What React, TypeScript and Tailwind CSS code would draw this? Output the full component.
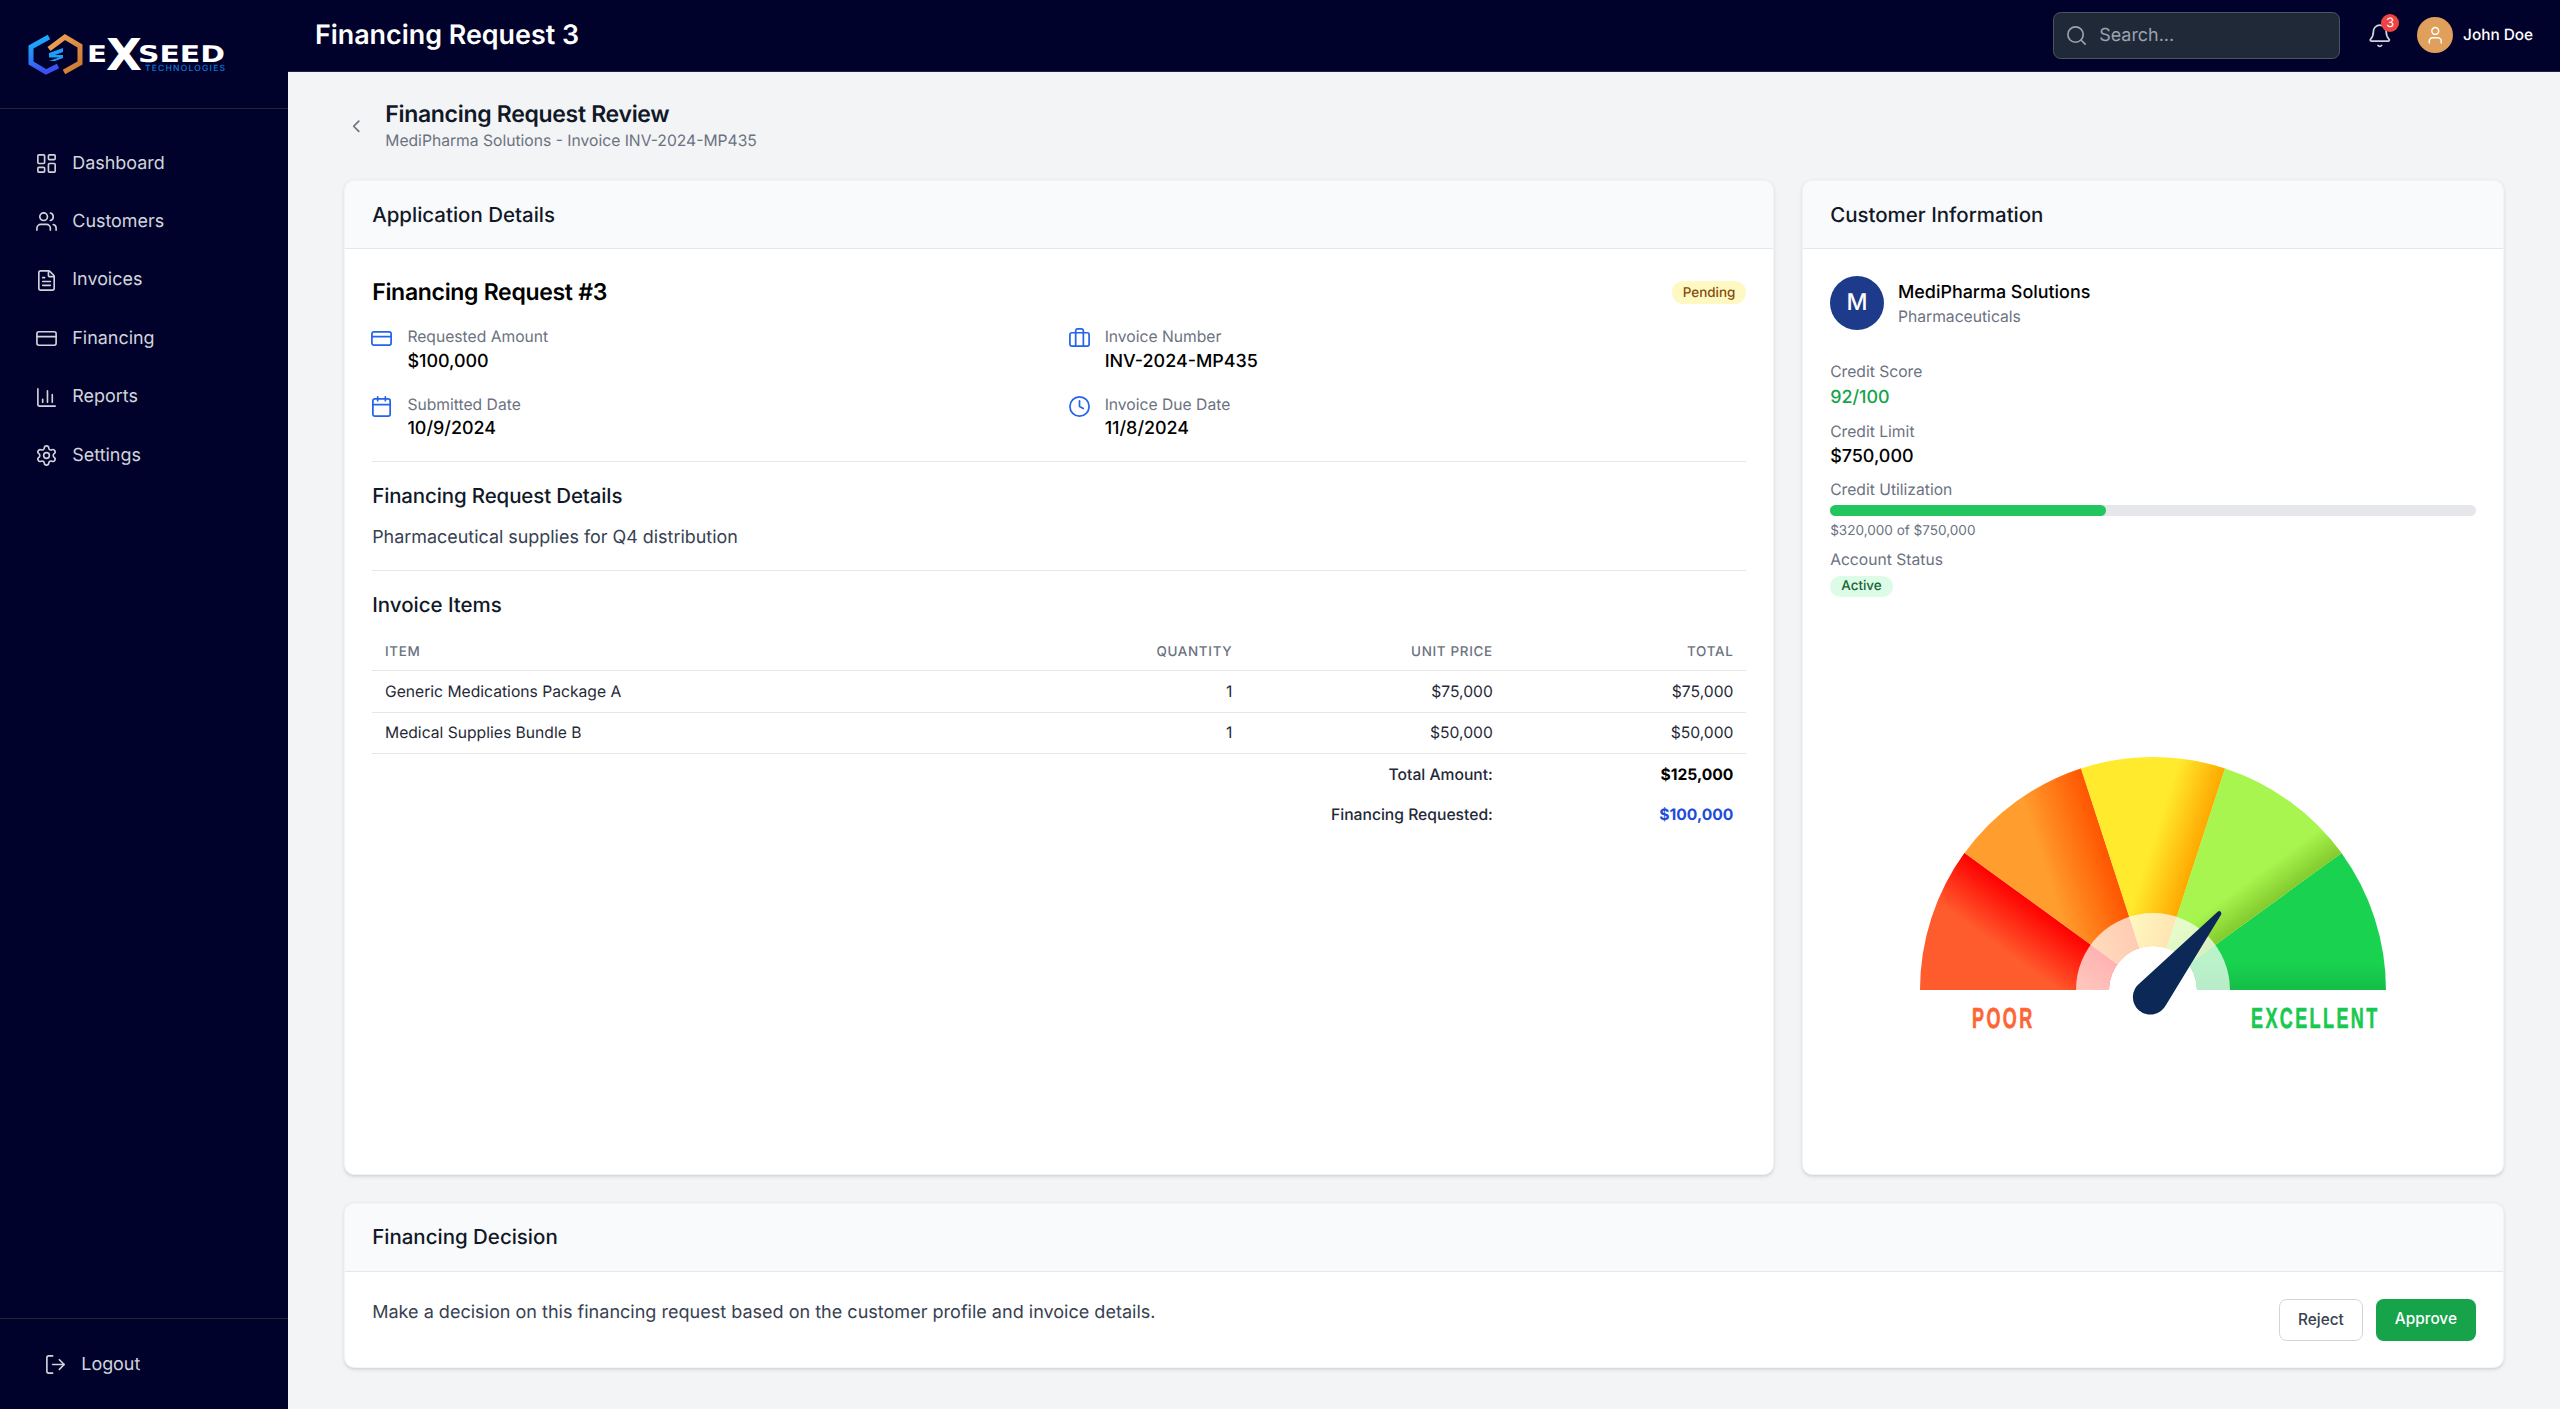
import {
  BarChart3,
  Bell,
  Briefcase,
  Calendar,
  ChevronLeft,
  Clock,
  CreditCard,
  FileText,
  LayoutDashboard,
  LogOut,
  Search,
  Settings,
  User,
  Users,
} from "lucide-react";

const navItems = [
  { label: "Dashboard", icon: LayoutDashboard },
  { label: "Customers", icon: Users },
  { label: "Invoices", icon: FileText },
  { label: "Financing", icon: CreditCard },
  { label: "Reports", icon: BarChart3 },
  { label: "Settings", icon: Settings },
];

function Logo() {
  return (
    <svg viewBox="0 -10 200 60" className="h-[46.9px] w-[156.25px]">
      <defs>
        <linearGradient id="logoBlue" x1="0" y1="0" x2="0.3" y2="1">
          <stop offset="0" stopColor="#18b8ff" />
          <stop offset="1" stopColor="#3b52f0" />
        </linearGradient>
        <linearGradient id="logoOrange" x1="0" y1="0" x2="1" y2="1">
          <stop offset="0" stopColor="#f2a65a" />
          <stop offset="1" stopColor="#c9772f" />
        </linearGradient>
      </defs>
      <polyline points="21,3 3,13 3,29 18,38 30,32" fill="none" stroke="url(#logoBlue)" strokeWidth="5" />
      <polyline points="21,15 37,3 52,12 52,29 36,38" fill="none" stroke="url(#logoOrange)" strokeWidth="5" />
      <path d="M21 19 L35 14 V18 L27 21 H35 V24 L27 27 H21 L31 23.5 H21 Z" fill="#1f9df5" />
      <text x="59" y="28" fontFamily="DejaVu Sans" fontWeight="700" fontSize="23" fill="#fff" textLength="20" lengthAdjust="spacingAndGlyphs">E</text>
      <text x="78" y="36" fontFamily="DejaVu Sans" fontWeight="700" fontSize="44" fill="#fff" textLength="36" lengthAdjust="spacingAndGlyphs">X</text>
      <text x="110" y="28" fontFamily="DejaVu Sans" fontWeight="700" fontSize="23" fill="#fff" textLength="87" lengthAdjust="spacingAndGlyphs">SEED</text>
      <text x="117" y="37" fontFamily="Inter" fontWeight="500" fontSize="8.5" fill="#0f78d8" textLength="80" lengthAdjust="spacing">TECHNOLOGIES</text>
    </svg>
  );
}

function Sidebar() {
  return (
    <aside className="flex h-full w-[225px] shrink-0 flex-col bg-[#01022b]">
      <div className="flex h-[85px] items-center border-b border-[#24263c] pl-[22px]">
        <Logo />
      </div>
      <nav className="flex flex-1 flex-col gap-[1.7px] pt-[20.6px]">
        {navItems.map((item) => {
          const Icon = item.icon;
          return (
            <a key={item.label} className="flex items-center gap-[11px] px-[27.5px] py-3 text-sm text-[#d1d5db]">
              <Icon className="size-[18px]" strokeWidth={1.7} />
              <span>{item.label}</span>
            </a>
          );
        })}
      </nav>
      <div className="flex h-[71px] items-center gap-[11px] border-t border-[#24263c] pt-[1px] pl-[34.5px] text-sm text-[#d1d5db]">
        <LogOut className="size-[18px]" strokeWidth={1.7} />
        <span>Logout</span>
      </div>
    </aside>
  );
}

function Topbar() {
  return (
    <header className="flex h-[56px] shrink-0 items-center justify-between border-b border-[#23253f] bg-[#01022b] pr-[21px] pl-[21px]">
      <h1 className="text-[21px] font-semibold text-white">Financing Request 3</h1>
      <div className="flex items-center">
        <div className="flex h-[37px] w-[224px] items-center gap-[9px] rounded-md border border-[#4b5563] bg-[#1f2937] pl-2">
          <Search className="size-[18px] text-[#9ca3af]" strokeWidth={1.7} />
          <span className="text-sm text-[#9ca3af]">Search...</span>
        </div>
        <div className="relative ml-[21px]">
          <Bell className="size-5 text-[#d1d5db]" strokeWidth={1.6} />
          <span className="absolute -top-[6.5px] -right-[5px] flex size-[14px] items-center justify-center rounded-full bg-[#ef4444] text-[10px] text-white">
            3
          </span>
        </div>
        <div className="ml-[19px] flex size-7 items-center justify-center rounded-full bg-[#e0a05c]">
          <User className="size-4 text-white" strokeWidth={1.7} />
        </div>
        <span className="ml-2 text-xs font-medium text-white">John Doe</span>
      </div>
    </header>
  );
}

function Card({ title, className, children }: { title: string; className?: string; children: React.ReactNode }) {
  return (
    <section className={`flex flex-col overflow-hidden rounded-lg border border-[#f3f4f6] bg-white shadow-sm ${className ?? ""}`}>
      <div className="flex h-[53px] shrink-0 items-center border-b border-[#e5e7eb] bg-[#f9fafb] px-[21px]">
        <h2 className="text-base font-medium text-[#111827]">{title}</h2>
      </div>
      {children}
    </section>
  );
}

function InfoItem({ icon: Icon, label, value }: { icon: typeof Clock; label: string; value: string }) {
  return (
    <div className="flex items-start gap-[11px]">
      <Icon className="-ml-[1.5px] size-[18px] text-[#2563eb]" strokeWidth={1.8} />
      <div>
        <div className="text-[12.25px] leading-4 text-[#6b7280]">{label}</div>
        <div className="mt-[1px] text-sm font-medium text-black">{value}</div>
      </div>
    </div>
  );
}

function ApplicationDetails() {
  return (
    <Card title="Application Details" className="min-w-0 flex-1">
      <div className="px-[21px] pt-[20px]">
        <div className="flex items-center justify-between">
          <h3 className="text-lg font-semibold tracking-[-0.014em] text-black">Financing Request #3</h3>
          <span className="flex h-[18px] w-[58px] items-center justify-center rounded-full bg-[#fef9c3] text-[10.5px] font-medium text-[#854d0e]">
            Pending
          </span>
        </div>
        <div className="mt-[13px] grid grid-cols-2 gap-x-4 gap-y-[15.5px] border-b border-[#e5e7eb] pb-[15px]">
          <InfoItem icon={CreditCard} label="Requested Amount" value="$100,000" />
          <InfoItem icon={Briefcase} label="Invoice Number" value="INV-2024-MP435" />
          <InfoItem icon={Calendar} label="Submitted Date" value="10/9/2024" />
          <InfoItem icon={Clock} label="Invoice Due Date" value="11/8/2024" />
        </div>
        <div className="border-b border-[#e5e7eb] pt-[15px] pb-[15px]">
          <h4 className="text-base font-medium tracking-[-0.006em] text-[#111827]">Financing Request Details</h4>
          <p className="mt-[10.5px] text-sm text-[#374151]">Pharmaceutical supplies for Q4 distribution</p>
        </div>
        <h4 className="mt-[15px] text-base font-medium text-[#111827]">Invoice Items</h4>
        <table className="mt-[8px] w-full table-fixed text-[12.25px] text-[#1f2937]">
          <thead>
            <tr className="border-b border-[#e5e7eb] text-[10.5px] tracking-wider text-[#6b7280] uppercase">
              <th className="h-[30.5px] w-[532px] px-2.5 pt-[2px] text-left font-medium">Item</th>
              <th className="w-[150px] px-2.5 pt-[2px] text-right font-medium">Quantity</th>
              <th className="w-[203.5px] px-2.5 pt-[2px] text-right font-medium">Unit Price</th>
              <th className="px-2.5 pt-[2px] text-right font-medium">Total</th>
            </tr>
          </thead>
          <tbody>
            <tr className="border-b border-[#e5e7eb]">
              <td className="h-[33px] px-2.5">Generic Medications Package A</td>
              <td className="px-2.5 text-right">1</td>
              <td className="px-2.5 text-right">$75,000</td>
              <td className="px-2.5 text-right">$75,000</td>
            </tr>
            <tr className="border-b border-[#e5e7eb]">
              <td className="h-[32px] px-2.5">Medical Supplies Bundle B</td>
              <td className="px-2.5 text-right">1</td>
              <td className="px-2.5 text-right">$50,000</td>
              <td className="px-2.5 text-right">$50,000</td>
            </tr>
            <tr>
              <td colSpan={3} className="h-[32px] px-2.5 text-right font-medium">
                Total Amount:
              </td>
              <td className="px-2.5 text-right font-bold text-black">$125,000</td>
            </tr>
            <tr>
              <td colSpan={3} className="h-[32px] px-2.5 text-right font-medium">
                Financing Requested:
              </td>
              <td className="px-2.5 text-right font-bold text-[#1d4ed8]">$100,000</td>
            </tr>
          </tbody>
        </table>
      </div>
    </Card>
  );
}

// Gauge geometry, angles run clockwise from the left end of the baseline
const CX = 250;
const CY = 240;
function pt(r: number, deg: number) {
  const a = (deg * Math.PI) / 180;
  return `${(CX - r * Math.cos(a)).toFixed(2)} ${(CY - r * Math.sin(a)).toFixed(2)}`;
}
function sector(a0: number, a1: number, r = 233) {
  return `M${CX} ${CY} L${pt(r, a0)} A${r} ${r} 0 0 1 ${pt(r, a1)} Z`;
}
function ring(r0: number, r1: number) {
  return `M${pt(r1, 0)} A${r1} ${r1} 0 0 1 ${pt(r1, 180)} L${pt(r0, 180)} A${r0} ${r0} 0 0 0 ${pt(r0, 0)} Z`;
}

const shades = [
  { id: "shadeRed", from: 0, base: "#ff5c2d", color: "#ff0000", width: 56 },
  { id: "shadeOrange", from: 36, base: "#ff9e2e", color: "#ff5500", width: 66 },
  { id: "shadeYellow", from: 72, base: "#ffea2e", color: "#ffa800", width: 46 },
  { id: "shadeLime", from: 108, base: "#a7f54e", color: "#84ca2e", width: 32 },
];

function Gauge() {
  return (
    <svg viewBox="0 0 500 300" className="mx-auto mt-[119.3px] block h-[234.4px] w-[390.6px]">
      <defs>
        {shades.map((s) => {
          const a = ((s.from + 36) * Math.PI) / 180;
          return (
            <linearGradient
              key={s.id}
              id={s.id}
              gradientUnits="userSpaceOnUse"
              x1={CX}
              y1={CY}
              x2={CX - s.width * Math.sin(a)}
              y2={CY + s.width * Math.cos(a)}
            >
              <stop offset="0" stopColor={s.color} />
              <stop offset="1" stopColor={s.color} stopOpacity="0" />
            </linearGradient>
          );
        })}
        <linearGradient id="shadeGreen" x1="0" y1="0" x2="0" y2="1">
          <stop offset="0.8" stopColor="#19d24f" />
          <stop offset="1" stopColor="#14bd48" />
        </linearGradient>
      </defs>
      <path d={sector(144, 180)} fill="url(#shadeGreen)" />
      {shades.map((s) => (
        <g key={s.id}>
          <path d={sector(s.from, s.from + 36)} fill={s.base} />
          <path d={sector(s.from, s.from + 36)} fill={`url(#${s.id})`} />
        </g>
      ))}
      <path d={ring(44, 77)} fill="#fff" fillOpacity="0.7" />
      <path d={ring(0, 44)} fill="#fff" />
      <path
        d="M237 233 L315 161.5 Q318 160 318.5 164 L263 255 A17.5 17.5 0 1 1 237 233 Z"
        fill="#0b2857"
      />
      <text transform="translate(69 278) scale(0.62 1)" fontFamily="Liberation Sans" fontWeight="700" fontSize="29" letterSpacing="3.9" fill="#ff6433" stroke="#ff6433" strokeWidth="0.6">
        POOR
      </text>
      <text transform="translate(348 278) scale(0.62 1)" fontFamily="Liberation Sans" fontWeight="700" fontSize="29" letterSpacing="3.9" fill="#18c94f" stroke="#18c94f" strokeWidth="0.6">
        EXCELLENT
      </text>
    </svg>
  );
}

function CustomerInfo() {
  return (
    <Card title="Customer Information" className="w-[548px] shrink-0">
      <div className="px-[21px] pt-[21px]">
        <div className="flex items-center gap-[11px]">
          <div className="flex size-[42px] items-center justify-center rounded-full bg-[#1e3a8a] text-lg font-medium text-white">
            M
          </div>
          <div className="pt-[1px]">
            <div className="text-sm font-medium text-black">MediPharma Solutions</div>
            <div className="mt-[1.5px] text-[12.25px] leading-4 text-[#6b7280]">Pharmaceuticals</div>
          </div>
        </div>
        <div className="mt-[25px] text-[12.25px] leading-4 text-[#6b7280]">Credit Score</div>
        <div className="mt-[2px] text-sm font-medium text-[#16a34a]">92/100</div>
        <div className="mt-[9.1px] text-[12.25px] leading-4 text-[#6b7280]">Credit Limit</div>
        <div className="mt-[1px] text-sm font-medium text-black">$750,000</div>
        <div className="mt-[8.3px] text-[12.25px] leading-4 text-[#6b7280]">Credit Utilization</div>
        <div className="mt-[3.7px] h-2 w-full rounded-full bg-[#e5e7eb]">
          <div className="h-2 w-[42.7%] rounded-full bg-[#22c55e]"></div>
        </div>
        <div className="mt-[4.5px] text-[10.6px] leading-4 text-[#6b7280]">$320,000 of $750,000</div>
        <div className="mt-[6px] text-[12.25px] leading-4 text-[#6b7280]">Account Status</div>
        <span className="mt-[4.5px] flex h-[16.5px] w-[49px] items-center justify-center rounded-full bg-[#dcfce7] text-[10.5px] font-medium text-[#166534]">
          Active
        </span>
        <Gauge />
      </div>
    </Card>
  );
}

export default function App() {
  return (
    <div className="flex h-[1100.8px] w-[2000px] overflow-hidden bg-[#f3f4f6] font-['Inter',sans-serif] [text-rendering:geometricPrecision] [zoom:1.28]">
      <Sidebar />
      <div className="flex min-w-0 flex-1 flex-col">
        <Topbar />
        <main className="flex min-h-0 flex-1 flex-col px-[44px] pb-[32px]">
          <div className="flex h-[85px] shrink-0 items-center">
            <ChevronLeft className="ml-[1px] size-[16px] text-[#6b7280]" />
            <div className="ml-[15px] -mt-[2px]">
              <div className="text-lg leading-[26px] font-semibold tracking-[-0.014em] text-[#111827]">Financing Request Review</div>
              <div className="text-[12.25px] leading-4 text-[#6b7280]">MediPharma Solutions - Invoice INV-2024-MP435</div>
            </div>
          </div>
          <div className="flex min-h-0 flex-1 gap-[22px]">
            <ApplicationDetails />
            <CustomerInfo />
          </div>
          <Card title="Financing Decision" className="mt-[22px] shrink-0">
            <div className="flex items-start justify-between px-[21px] pt-[21px] pb-5">
              <p className="mt-[0.5px] text-[14.1px] text-[#374151]">
                Make a decision on this financing request based on the customer profile and invoice details.
              </p>
              <div className="flex gap-[10px]">
                <button className="h-[33.5px] w-[66px] rounded-md border border-[#d1d5db] bg-white text-xs font-medium text-[#374151]">
                  Reject
                </button>
                <button className="h-[33px] w-[78px] rounded-md bg-[#16a34a] text-xs font-medium text-white">
                  Approve
                </button>
              </div>
            </div>
          </Card>
        </main>
      </div>
    </div>
  );
}
